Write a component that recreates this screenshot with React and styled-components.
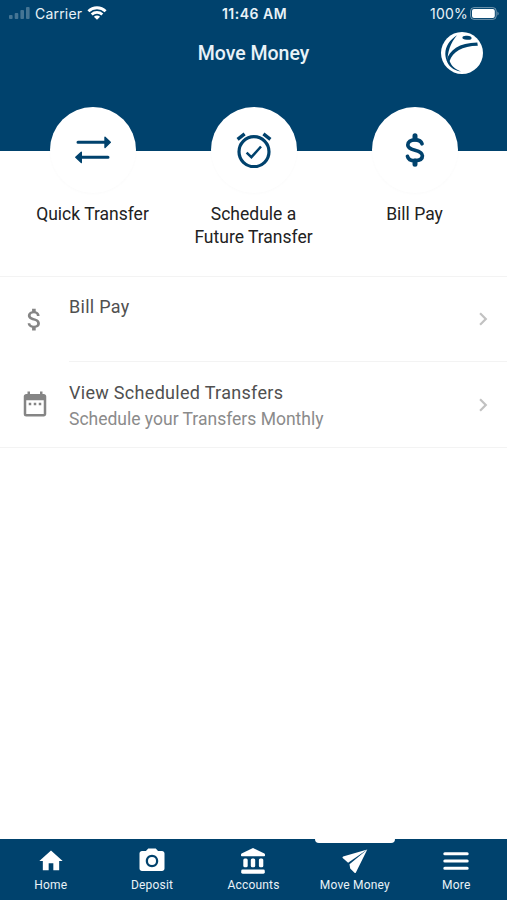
import styled, { createGlobalStyle } from 'styled-components';
import { MdAttachMoney, MdDateRange, MdChevronRight, MdHome, MdPhotoCamera } from 'react-icons/md';

const GlobalStyle = createGlobalStyle`
    * {
        box-sizing: border-box;
    }
    body {
        margin: 0;
        background: #fff;
        font-family: Roboto, "Liberation Sans", sans-serif;
    }
`

const Screen = styled.div`
    width: 100%;
    height: 900px;
    display: flex;
    flex-direction: column;
    background: #fff;
    overflow: hidden;
`

const Header = styled.header`
    height: 151px;
    flex-shrink: 0;
    background: #00426d;
    color: #e9f2f8;
`

const StatusBar = styled.div`
    height: 28px;
    padding: 0 7px 0 9px;
    display: grid;
    grid-template-columns: 1fr auto 1fr;
    align-items: center;
    font-family: Inter, Roboto, sans-serif;
    font-size: 14px;
    line-height: 28px;
    letter-spacing: 0.2px;
`

const StatusGroup = styled.div`
    display: flex;
    align-items: center;
    justify-content: ${(props) => props.$end ? 'flex-end' : 'flex-start'};
    gap: ${(props) => props.$end ? '2px' : '5px'};
    svg {
        flex-shrink: 0;
        margin-top: -2px;
    }
`

const Time = styled.span`
    font-weight: 600;
    letter-spacing: 0.5px;
`

const TitleBar = styled.div`
    height: 50px;
    padding: 0 24px;
    display: grid;
    grid-template-columns: 42px 1fr 42px;
    align-items: center;
`

const Title = styled.h1`
    grid-column: 2;
    margin: 2px 0 0;
    font-size: 19.5px;
    line-height: 24px;
    font-weight: 500;
    text-align: center;
`

const Actions = styled.div`
    height: 169px;
    margin-top: -44px;
    padding: 0 12px;
    flex-shrink: 0;
    display: grid;
    grid-template-columns: repeat(3, 1fr);
`

const Action = styled.div`
    display: flex;
    flex-direction: column;
    align-items: center;
    color: #222;
    font-size: 17.5px;
    line-height: 22.5px;
    text-align: center;
    white-space: pre-line;
`

const Circle = styled.div`
    width: 86px;
    height: 86px;
    margin-bottom: 10px;
    display: flex;
    align-items: center;
    justify-content: center;
    border-radius: 50%;
    background: #fff;
    color: #00426d;
    box-shadow: 0 1px 3px rgba(0, 0, 0, 0.02);
`

const List = styled.ul`
    margin: 0;
    padding: 0;
    list-style: none;
    border-top: 1px solid #f3f3f3;
    border-bottom: 1px solid #f3f3f3;
`

const Item = styled.li`
    display: grid;
    grid-template-columns: 69px 1fr;
    align-items: stretch;
`

const ItemIcon = styled.div`
    display: flex;
    align-items: center;
    justify-content: center;
    color: #858585;
`

const ItemBody = styled.div`
    height: ${(props) => props.$first ? '84px' : '86px'};
    padding-right: 11px;
    display: flex;
    align-items: center;
    justify-content: space-between;
    border-top: ${(props) => props.$first ? '0' : '1px solid #f3f3f3'};
    color: #c2c2c2;
`

const ItemText = styled.div`
    height: 52px;
    margin-top: 2px;
    font-size: 18px;
    line-height: 26px;
`

const Name = styled.div`
    color: #505050;
    letter-spacing: 0.3px;
`

const Detail = styled.div`
    color: #8b8b8b;
    font-size: 17.5px;
`

const TabBar = styled.nav`
    height: 61px;
    margin-top: auto;
    flex-shrink: 0;
    display: grid;
    grid-template-columns: repeat(5, 1fr);
    background: #00426d;
`

const Tab = styled.div`
    display: flex;
    flex-direction: column;
    align-items: center;
    color: #fff;
`

const Marker = styled.div`
    width: 80px;
    height: 4px;
    border-radius: 0 0 4px 4px;
    background: ${(props) => props.$active ? '#fff' : 'transparent'};
`

const TabIcon = styled.div`
    height: 34px;
    margin-top: 1px;
    display: flex;
    align-items: center;
    justify-content: center;
`

const TabLabel = styled.span`
    font-size: 12px;
    line-height: 14px;
    color: #e9f2f8;
    letter-spacing: 0.2px;
`

const Signal = () => (
    <svg width="21" height="12" viewBox="0 0 21 12" fill="#fff" opacity="0.27">
        <rect x="0" y="8" width="3.6" height="4" rx="1" />
        <rect x="5.7" y="6" width="3.6" height="6" rx="1" />
        <rect x="11.4" y="3" width="3.6" height="9" rx="1" />
        <rect x="17" y="0" width="3.6" height="12" rx="1" />
    </svg>
)

const Wifi = () => (
    <svg width="20" height="14" viewBox="0 0 20 14" fill="none" stroke="#fff" strokeWidth="2.8">
        <path d="M1.4 5.2C6.2 .6 13.8 .6 18.6 5.2" />
        <path d="M4.7 8.5C7.7 5.7 12.3 5.7 15.3 8.5" />
        <path d="M10 13.8 6.9 10.7C8.6 9.2 11.4 9.2 13.1 10.7Z" fill="#fff" stroke="none" />
    </svg>
)

const Battery = () => (
    <svg width="30" height="13" viewBox="0 0 30 13">
        <rect x="0.6" y="0.6" width="25.6" height="11.8" rx="3.4" fill="none" stroke="#fff" strokeOpacity="0.45" />
        <rect x="2" y="2" width="22.8" height="9" rx="2" fill="#fff" />
        <path d="M27.5 4.4q2.2 2.1 0 4.2z" fill="#fff" fillOpacity="0.5" />
    </svg>
)

const Logo = () => (
    <svg width="42" height="42" viewBox="0 0 42 42">
        <circle cx="21" cy="21" r="21" fill="#fff" />
        <g fill="#00426d">
            <ellipse cx="26" cy="5.8" rx="4.6" ry="2" transform="rotate(5 26 5.8)" />
            <path d="M16 3.2C9 7.5 4.3 14 4.3 22C4.4 25 5.2 28 6.5 30C6.4 20 9.4 11 16 3.2Z" />
            <path d="M36.8 13.8C21 14 11.8 20 8.6 29C10.5 34 14 37.2 20 39.5C12 38.2 7.2 34 5.7 28.5C8 18.5 18 10.8 36.3 10.6Z" />
        </g>
    </svg>
)

const TransferIcon = () => (
    <svg width="36" height="28" viewBox="0 0 36 28" fill="currentColor" stroke="currentColor" strokeLinecap="round" strokeLinejoin="round">
        <path d="M3 6.3H30M6 21.3H33" strokeWidth="3" />
        <path d="M30 1.3 35.3 6.3 30 11.5ZM6.3 16.2 .8 21.3 6.3 26.5Z" strokeWidth="1.4" />
    </svg>
)

const AlarmIcon = () => (
    <svg width="36" height="36" viewBox="0 0 36 36" fill="none" stroke="currentColor" strokeWidth="3.2">
        <circle cx="18" cy="19.7" r="15" />
        <path d="M1.6 7.3 8.6 1.8M27.4 1.8 34.4 7.3" strokeWidth="3.4" />
        <path d="M10.6 20.6 15.4 25.2 25 14.5" strokeWidth="2.5" />
    </svg>
)

const DollarIcon = () => (
    <svg width="20" height="34" viewBox="0 0 20 34" fill="none" stroke="currentColor" strokeWidth="3.7" strokeLinecap="round">
        <path d="M17 10.8C16.3 8.2 13.6 6.8 10 6.8C5.6 6.8 2.8 8.8 2.8 12C2.8 15 5.3 16.1 10 17.2C14.8 18.4 17.4 19.8 17.4 22.8C17.4 26 14.4 27.7 10 27.7C6.2 27.7 3.2 26.4 2.5 23.3" />
        <path d="M10 2.8V6M10 28V31.2" strokeWidth="5" />
    </svg>
)

const BankIcon = () => (
    <svg width="24" height="26" viewBox="0 0 24 26" fill="currentColor">
        <path d="M12 0 23.4 5.4Q24 5.8 24 6.5V7.4Q24 8.2 23.2 8.2H.8Q0 8.2 0 7.4V6.5Q0 5.8 .6 5.4Z" />
        <rect x="2.3" y="10.4" width="4.4" height="8.8" rx="1.5" />
        <rect x="9.8" y="10.4" width="4.4" height="8.8" rx="1.5" />
        <rect x="17.9" y="10.4" width="4.4" height="8.8" rx="1.5" />
        <rect x="0.2" y="21.5" width="23.6" height="4.2" rx="1.4" />
    </svg>
)

const PlaneIcon = () => (
    <svg width="26" height="25" viewBox="0 0 26 25" fill="currentColor">
        <path d="M25.3 .4 1.1 7.6Q0 8.1 .7 9.1L6.1 13.7Z" />
        <path d="M25.3 .4 7.5 15.2 8.2 19.6 12.5 23.8Q13.4 24.5 13.9 23.4Z" />
    </svg>
)

const MenuIcon = () => (
    <svg width="26" height="18" viewBox="0 0 26 18" stroke="currentColor" strokeWidth="3" strokeLinecap="round">
        <path d="M1.8 1.8H24.2M1.8 9H24.2M1.8 16.2H24.2" />
    </svg>
)

const actions = [
    { label: 'Quick Transfer', icon: <TransferIcon /> },
    { label: 'Schedule a\nFuture Transfer', icon: <AlarmIcon /> },
    { label: 'Bill Pay', icon: <DollarIcon /> },
]

const items = [
    { name: 'Bill Pay', icon: <MdAttachMoney size={29} /> },
    { name: 'View Scheduled Transfers', detail: 'Schedule your Transfers Monthly', icon: <MdDateRange size={30} /> },
]

const tabs = [
    { label: 'Home', icon: <MdHome size={28} /> },
    { label: 'Deposit', icon: <MdPhotoCamera size={30} /> },
    { label: 'Accounts', icon: <BankIcon /> },
    { label: 'Move Money', icon: <PlaneIcon />, active: true },
    { label: 'More', icon: <MenuIcon /> },
]

const App = () => {
    return (
        <>
        <GlobalStyle />
            <Screen>
                <Header>
                    <StatusBar>
                        <StatusGroup><Signal /><span>Carrier</span><Wifi /></StatusGroup>
                        <Time>11:46 AM</Time>
                        <StatusGroup $end><span>100%</span><Battery /></StatusGroup>
                    </StatusBar>
                    <TitleBar>
                        <Title>Move Money</Title>
                        <Logo />
                    </TitleBar>
                </Header>
                <Actions>
                    {
                        actions.map((v) => {
                            return (
                                <Action key={v.label}>
                                    <Circle>{v.icon}</Circle>
                                    {v.label}
                                </Action>
                            )
                        })
                    }
                </Actions>
                <List>
                    {
                        items.map((v, i) => {
                            return (
                                <Item key={v.name}>
                                    <ItemIcon>{v.icon}</ItemIcon>
                                    <ItemBody $first={i === 0}>
                                        <ItemText>
                                            <Name>{v.name}</Name>
                                            {v.detail && <Detail>{v.detail}</Detail>}
                                        </ItemText>
                                        <MdChevronRight size={26} />
                                    </ItemBody>
                                </Item>
                            )
                        })
                    }
                </List>
                <TabBar>
                    {
                        tabs.map((v) => {
                            return (
                                <Tab key={v.label}>
                                    <Marker $active={v.active} />
                                    <TabIcon>{v.icon}</TabIcon>
                                    <TabLabel>{v.label}</TabLabel>
                                </Tab>
                            )
                        })
                    }
                </TabBar>
            </Screen>
        </>
    )
}

export default App;
